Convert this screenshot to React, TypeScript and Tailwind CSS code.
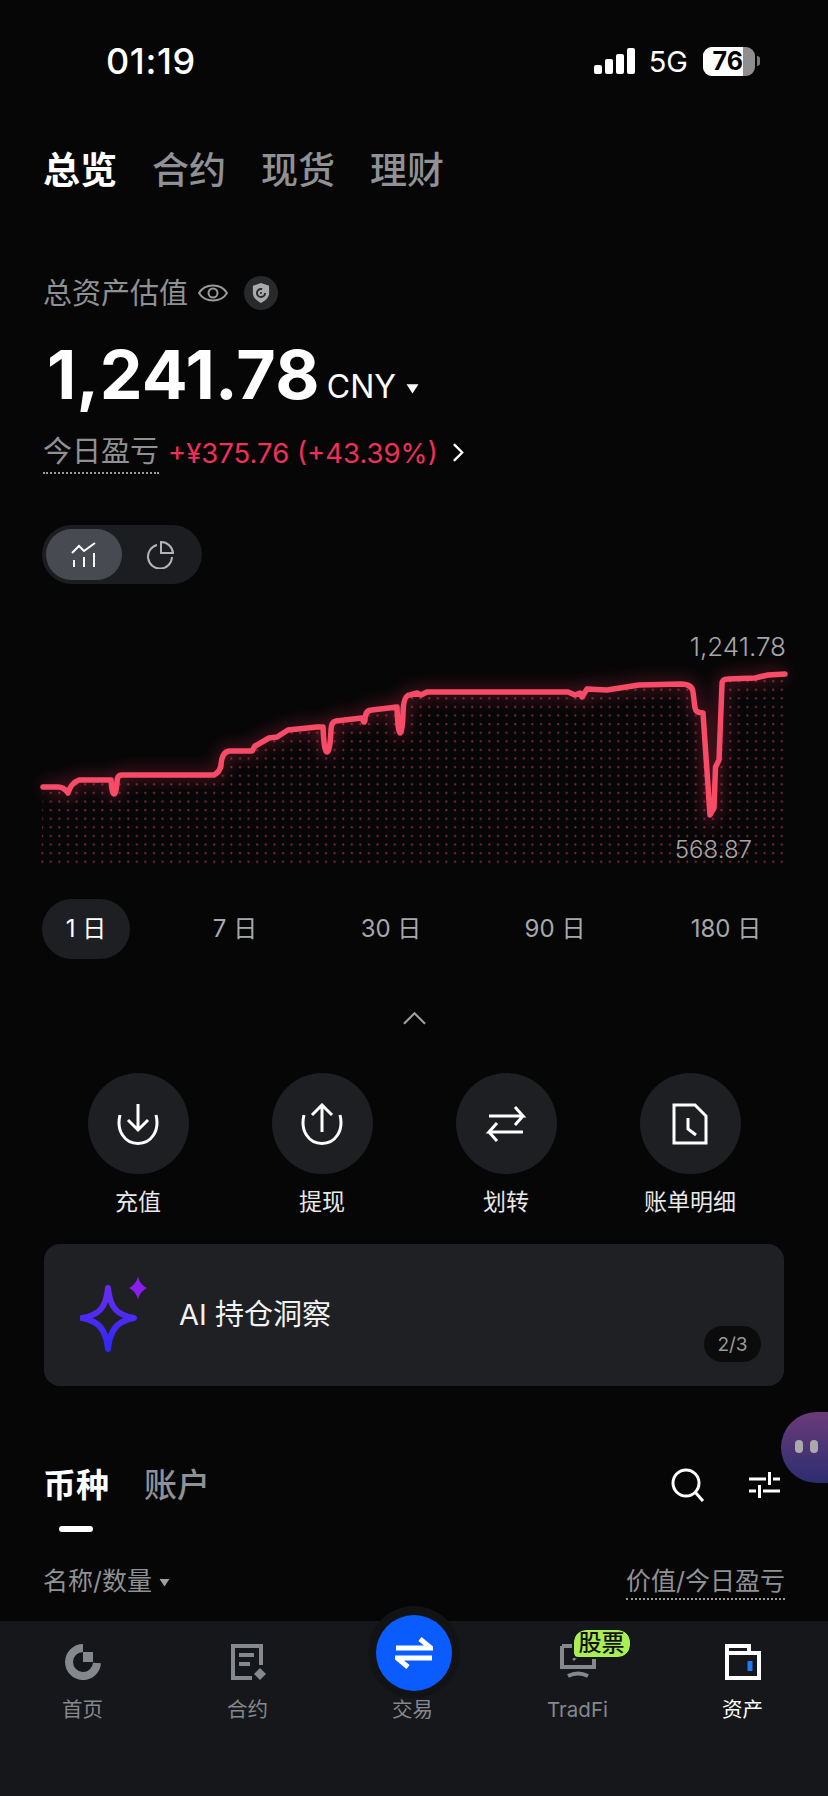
const LINE =
  "M43 787 L58 787 Q64 787 68 793 Q71 783 79 780 L111 780 Q112 794 114 794 Q116 794 117 782 Q117 775 122 775 L214 775 Q220 772 221 765 Q222 751 230 751 L252 751 L255 746 L269 738 L277 737 L288 730 L317 727 L323 727 Q324 752 327 752 Q330 752 331 730 Q331 722 336 721 L362 718 Q364 725 365 720 Q365 710 372 710 L397 707 Q398 733 400 733 Q402 733 403 715 Q403 695 410 695 L417 693 L421 695 L427 692 L568 692 L575 695 L580 693 L582 697 L587 689 L607 690 L639 685 L681 684 Q692 684 693 692 L695 708 Q696 713 703 713 L710 815 L714 808 L715.5 767 L719 760 L722 684 Q722 679 728 679 L755 678 L768 675 L785 674";

const font = "font-['Inter','Noto_Sans_CJK_SC',sans-serif]";

function Signal() {
  return (
    <div className="flex items-end gap-[3px] h-[26px]">
      <div className="w-[8px] h-[9px] rounded-[2px] bg-white" />
      <div className="w-[8px] h-[15px] rounded-[2px] bg-white" />
      <div className="w-[8px] h-[20px] rounded-[2px] bg-white" />
      <div className="w-[8px] h-[26px] rounded-[2px] bg-white" />
    </div>
  );
}

function Battery() {
  return (
    <div className="flex items-center gap-[2px]">
      <div className="w-[52px] h-[29px] rounded-[9px] overflow-hidden flex bg-[#8e8e8e]">
        <div className="w-[40px] h-full bg-white flex items-center justify-end">
          <span className="text-[25px] leading-none font-bold text-black">76</span>
        </div>
      </div>
      <div className="w-[3px] h-[10px] rounded-r-full bg-[#777]" />
    </div>
  );
}

function Triangle({ className }: { className: string }) {
  return (
    <svg viewBox="0 0 12 10" className={className} fill="currentColor">
      <path d="M0.5 1 H11.5 L6 9.5 Z" />
    </svg>
  );
}

function ActionCircle({ label, children }: { label: string; children: React.ReactNode }) {
  return (
    <div className="w-[184px] flex flex-col items-center">
      <div className="w-[101px] h-[101px] rounded-full bg-[#1d1f22] flex items-center justify-center">
        <svg viewBox="0 0 42 42" className="w-[42px] h-[42px]" fill="none" stroke="white" strokeWidth="3">
          {children}
        </svg>
      </div>
      <span className="mt-[13px] text-[23px] leading-[30px] text-[#e8e8e8]">{label}</span>
    </div>
  );
}

function NavItem({ label, active, children }: { label: string; active?: boolean; children?: React.ReactNode }) {
  return (
    <div className="w-[165px] flex flex-col items-center">
      <div className="relative w-[40px] h-[40px] flex items-center justify-center">{children}</div>
      <span className={`mt-[15px] text-[20.500px] leading-[26px] ${active ? "text-white" : "text-[#85888d]"}`}>{label}</span>
    </div>
  );
}

export default function App() {
  return (
    <div className={`${font} relative w-[828px] h-[1796px] overflow-hidden bg-[#060607] text-white flex flex-col`}>
      {/* status bar */}
      <div className="h-[148px] pt-[41px] pl-[106px] pr-[68px] shrink-0">
        <div className="h-[40px] flex items-center justify-between">
          <span className="text-[36px] font-medium leading-none tracking-[0.6px]">01:19</span>
          <div className="flex items-center">
            <Signal />
            <span className="ml-[14px] mr-[15px] text-[29px] leading-none">5G</span>
            <Battery />
          </div>
        </div>
      </div>

      {/* tabs */}
      <div className="h-[44px] pl-[43px] flex items-center gap-[35px] text-[37px] leading-none font-medium text-[#8f9194] shrink-0">
        <span className="text-white font-bold">总览</span>
        <span>合约</span>
        <span>现货</span>
        <span>理财</span>
      </div>

      {/* balance */}
      <div className="mt-[81px] h-[40px] pl-[43px] flex items-center text-[29px] leading-none text-[#8f9194] shrink-0">
        <span>总资产估值</span>
        <svg viewBox="0 0 30 22" className="ml-[10px] w-[30px] h-[22px]" fill="none" stroke="#9a9a9a" strokeWidth="2">
          <path d="M1 11 C7 1 23 1 29 11 C23 21 7 21 1 11 Z" />
          <circle cx="15" cy="11" r="4.5" />
        </svg>
        <div className="ml-[16px] w-[34px] h-[34px] rounded-full bg-[#28292b] flex items-center justify-center">
          <svg viewBox="0 0 20 22" className="w-[18px] h-[20px]">
            <path d="M10 0 L19 3 V11 C19 16 15 19.500 10 22 C5 19.500 1 16 1 11 V3 Z" fill="#aaaaaa" />
            <circle cx="10" cy="11" r="4.500" fill="none" stroke="#28292b" strokeWidth="2.200" strokeDasharray="22 6" />
            <circle cx="10" cy="11" r="1.200" fill="#28292b" />
          </svg>
        </div>
      </div>

      <div className="mt-[25px] h-[72px] pl-[47px] flex items-end shrink-0">
        <span className="text-[68px] leading-[72px] font-bold tracking-[0.3px]">1,241.78</span>
        <span className="ml-[7px] mb-[3px] text-[32px] leading-[40px]">CNY</span>
        <Triangle className="ml-[10px] mb-[16px] w-[13px] h-[11px] text-white" />
      </div>

      <div className="mt-[23px] h-[42px] pl-[43px] flex items-start shrink-0">
        <span className="h-[41px] text-[29px] leading-[38px] text-[#8f9194] border-b-2 border-dotted border-[#9a9a9a]">今日盈亏</span>
        <span className="ml-[9px] mt-[1px] text-[27.500px] leading-[38px] text-[#f0305a]">+¥375.76 (+43.39%)</span>
        <svg viewBox="0 0 14 22" className="ml-[14px] mt-[9px] w-[13px] h-[21px]" fill="none" stroke="white" strokeWidth="2.500">
          <path d="M2 2 L11 11 L2 20" />
        </svg>
      </div>

      {/* chart type switch */}
      <div className="mt-[50px] ml-[42px] w-[160px] h-[59px] rounded-full bg-[#1b1d20] p-[4px] flex items-center shrink-0">
        <div className="w-[76px] h-[51px] rounded-full bg-[#474a50] flex items-center justify-center">
          <svg viewBox="0 0 26 26" className="w-[26px] h-[26px]" fill="none" stroke="white" strokeWidth="2">
            <path d="M1 11 L8 4 L13 9 L24 1" />
            <path d="M3 25 V18 M13 25 V15 M23 25 V11" />
          </svg>
        </div>
        <div className="w-[76px] flex items-center justify-center">
          <svg viewBox="0 0 28 28" className="w-[28px] h-[28px]" fill="none" stroke="#b4b4b4" strokeWidth="2">
            <path d="M11 4 A12 12 0 1 0 26 16" />
            <path d="M15 1 A12 12 0 0 1 27 12 H15 Z" />
          </svg>
        </div>
      </div>

      {/* chart */}
      <div className="relative mt-[46px] h-[250px] shrink-0">
        <svg viewBox="0 630 828 250" className="w-[828px] h-[250px]" fill="none">
          <defs>
            <pattern id="dots" x="41" y="680" width="8.600" height="8.600" patternUnits="userSpaceOnUse">
              <circle cx="1.200" cy="1.200" r="1.100" fill="#d8405c" />
            </pattern>
            <clipPath id="under">
              <path d={`${LINE} L787 864 L41 864 Z`} />
            </clipPath>
            <filter id="glow" x="-5%" y="-30%" width="110%" height="160%">
              <feGaussianBlur stdDeviation="8" />
            </filter>
          </defs>
          <rect x="41" y="670" width="746" height="194" fill="url(#dots)" clipPath="url(#under)" opacity="0.6" />
          <path d={LINE} stroke="#ff3a5e" strokeWidth="10" opacity="0.3" filter="url(#glow)" />
          <path d={LINE} stroke="#f84b68" strokeWidth="5.500" strokeLinecap="round" strokeLinejoin="round" />
        </svg>
        <span className="absolute right-[42px] top-[2px] text-[26px] leading-[30px] font-light text-[#a6a6a6]">1,241.78</span>
        <span className="absolute right-[76px] top-[205px] text-[24px] leading-[30px] font-light text-[#a6a6a6]">568.87</span>
      </div>

      {/* range */}
      <div className="mt-[19px] h-[60px] pl-[42px] flex items-center text-[24px] leading-none text-[#a6a8ab] shrink-0">
        <div className="w-[88px] h-[60px] rounded-full bg-[#1d1f22] text-white flex items-center justify-center">1 日</div>
        <div className="w-[162px] text-center ml-[24px]">7 日</div>
        <div className="w-[150px] text-center">30 日</div>
        <div className="w-[178px] text-center">90 日</div>
        <div className="w-[164px] text-center">180 日</div>
      </div>

      <div className="mt-[52px] h-[20px] flex justify-center shrink-0">
        <svg viewBox="0 0 24 14" className="w-[23px] h-[14px]" fill="none" stroke="#a0a0a0" strokeWidth="2.200">
          <path d="M1 13 L12 2 L23 13" />
        </svg>
      </div>

      {/* actions */}
      <div className="mt-[42px] pl-[46px] flex shrink-0">
        <ActionCircle label="充值">
          <path d="M21 1 V27 M11 17 L21 27 L31 17" />
          <path d="M3 12 C-1 28 8 40.500 21 40.500 C34 40.500 43 28 39 12" />
        </ActionCircle>
        <ActionCircle label="提现">
          <path d="M21 29 V2 M11 12 L21 2 L31 12" />
          <path d="M3 12 C-1 28 8 40.500 21 40.500 C34 40.500 43 28 39 12" />
        </ActionCircle>
        <ActionCircle label="划转">
          <path d="M4 13 H38 L30 4 M38 13 L30 22" />
          <path d="M38 29 H4 L12 20 M4 29 L12 38" />
        </ActionCircle>
        <ActionCircle label="账单明细">
          <path d="M5 2 H26 L37 13 V40 H5 Z" />
          <path d="M19 15 V26 L27 32" />
        </ActionCircle>
      </div>

      {/* AI card */}
      <div className="mt-[27px] mx-[44px] h-[142px] rounded-[16px] bg-[#1e2024] relative flex items-center pl-[36px] shrink-0">
        <svg viewBox="0 0 68 76" className="w-[68px] h-[76px] -mt-[2px]" fill="none">
          <defs>
            <linearGradient id="spark" x1="0" y1="0" x2="0" y2="1">
              <stop offset="0" stopColor="#6a2cf0" />
              <stop offset="1" stopColor="#3028f5" />
            </linearGradient>
          </defs>
          <path d="M28 12 C30 32 37 39 54 42 C37 45 30 54 28 73 C26 54 19 45 2 42 C19 39 26 32 28 12 Z" stroke="url(#spark)" strokeWidth="6" strokeLinejoin="round" />
          <path d="M58 0 C59 6 63 10 67 12 C63 14 59 18 58 24 C57 18 53 14 49 12 C53 10 57 6 58 0 Z" fill="#8a1df0" />
        </svg>
        <span className="ml-[31px] -mt-[2px] text-[29px] leading-none text-[#f2f2f2]">AI 持仓洞察</span>
        <div className="absolute right-[23px] bottom-[24px] w-[57px] h-[36px] rounded-full bg-[#0b0b0c] flex items-center justify-center text-[19px] leading-none text-[#9a9a9a]">2/3</div>
      </div>

      {/* coin / account */}
      <div className="mt-[74px] h-[50px] pl-[43px] pr-[47px] flex items-center justify-between shrink-0">
        <div className="flex gap-[35px] text-[33px] leading-none font-medium">
          <span className="font-bold">币种</span>
          <span className="text-[#8f9194]">账户</span>
        </div>
        <div className="flex items-center gap-[43px]">
          <svg viewBox="0 0 34 34" className="w-[34px] h-[34px]" fill="none" stroke="white" strokeWidth="3">
            <circle cx="15" cy="15" r="13" />
            <path d="M24 24 L32 33" />
          </svg>
          <svg viewBox="0 0 33 28" className="w-[33px] h-[28px]" fill="none" stroke="white" strokeWidth="3">
            <path d="M1 8 H18 M25 8 H32 M21.500 1 V14" />
            <path d="M1 20 H8 M15 20 H32 M11.500 14 V27" />
          </svg>
        </div>
      </div>
      <div className="mt-[16px] ml-[59px] w-[34px] h-[6px] rounded-full bg-white shrink-0" />

      {/* table head */}
      <div className="mt-[32px] h-[36px] pl-[43px] pr-[43px] flex items-start justify-between text-[25px] leading-[34px] text-[#8f9194] shrink-0">
        <div className="flex items-center">
          <span>名称/数量</span>
          <Triangle className="ml-[7px] mt-[2px] w-[11px] h-[9px] text-[#a0a0a0]" />
        </div>
        <span className="h-[36px] border-b-2 border-dotted border-[#9a9a9a]">价值/今日盈亏</span>
      </div>

      {/* bottom nav */}
      <div className="relative mt-[21px] flex-1 bg-[#15171a] pt-[21px] flex justify-start">
        <div className="absolute left-[368px] -top-[15px] w-[92px] h-[92px] rounded-full bg-[#111315]" />
        <div className="absolute left-[376px] -top-[6px] w-[76px] h-[76px] rounded-full bg-[#0b5cff] flex items-center justify-center">
          <svg viewBox="0 0 38 32" className="w-[38px] h-[32px]" fill="none" stroke="white" strokeWidth="5">
            <path d="M1 11 H36 L25 2" />
            <path d="M37 21 H2 L13 30" />
          </svg>
        </div>
        <NavItem label="首页">
          <svg viewBox="0 0 36 36" className="w-[36px] h-[36px]" fill="none">
            <path d="M18 4 A14 14 0 1 0 32 19" stroke="#85888d" strokeWidth="8" />
            <rect x="18" y="8" width="10" height="10" fill="#85888d" />
          </svg>
        </NavItem>
        <NavItem label="合约">
          <svg viewBox="0 0 36 38" className="w-[36px] h-[38px]" fill="none" stroke="#85888d" strokeWidth="4">
            <path d="M22 35 H3 V3 H31 V22" />
            <path d="M9 12 H24 M9 21 H20" />
            <path d="M30 25 L36 31 L30 37 L24 31 Z" fill="#85888d" stroke="none" />
          </svg>
        </NavItem>
        <NavItem label="交易" />
        <NavItem label="TradFi">
          <svg viewBox="0 0 36 34" className="w-[36px] h-[34px] -mt-[3px]" fill="none" stroke="#85888d" strokeWidth="4">
            <path d="M2 2 V23 H34 V2 M2 2 H14" />
            <path d="M8 32 Q18 27 28 32" />
            <path d="M13 16 L18 12 H27" strokeWidth="2.500" />
          </svg>
          <div className="absolute left-[16px] -top-[12px] w-[56px] h-[27px] rounded-[12px] rounded-bl-[4px] bg-[#a9ee54] outline-2 outline-[#15171a] flex items-center justify-center text-[23px] leading-none font-medium text-[#111]">股票</div>
        </NavItem>
        <NavItem label="资产" active>
          <svg viewBox="0 0 36 36" className="w-[36px] h-[36px]" fill="none" stroke="white" strokeWidth="4">
            <path d="M2 34 V2 H24 V9 H34 V34 Z" />
            <path d="M2 9 H24" />
            <path d="M25 17 V27" stroke="#1f7bf2" strokeWidth="5" />
          </svg>
        </NavItem>
      </div>

      {/* floating assistant */}
      <div className="absolute left-[781px] top-[1412px] w-[60px] h-[71px] rounded-l-full bg-gradient-to-b from-[#6b3a78] to-[#2b2d70] flex gap-[7px] pt-[28px] pl-[14px]">
        <div className="w-[8px] h-[13px] rounded-full bg-[#aaaaaa]" />
        <div className="w-[8px] h-[13px] rounded-full bg-[#aaaaaa]" />
      </div>
    </div>
  );
}
